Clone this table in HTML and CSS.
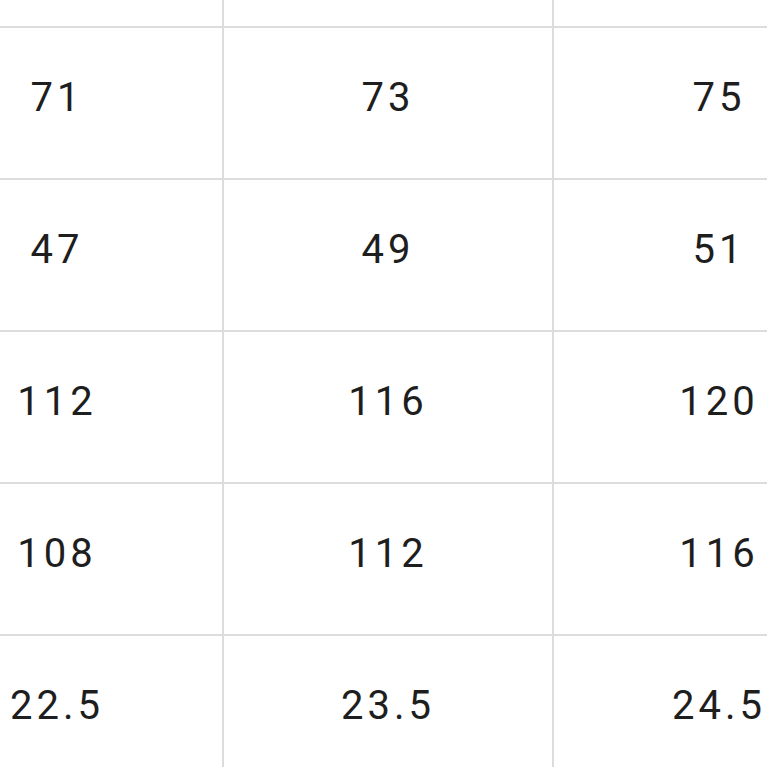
FILE: index.html
```html
<!DOCTYPE html>
<html>
<head>
<meta charset="utf-8">
<link rel="stylesheet" href="styles.css">
</head>
<body>
<div class="viewport">
  <div class="table">
    <div class="cell"></div><div class="cell"></div><div class="cell"></div>
    <div class="cell">71</div><div class="cell">73</div><div class="cell">75</div>
    <div class="cell">47</div><div class="cell">49</div><div class="cell">51</div>
    <div class="cell">112</div><div class="cell">116</div><div class="cell">120</div>
    <div class="cell">108</div><div class="cell">112</div><div class="cell">116</div>
    <div class="cell">22.5</div><div class="cell">23.5</div><div class="cell">24.5</div>
  </div>
</div>
</body>
</html>
```
FILE: styles.css
```css
html, body {
  margin: 0;
  padding: 0;
  background: #ffffff;
}
.viewport {
  width: 767px;
  height: 767px;
  overflow: hidden;
}
.table {
  display: grid;
  grid-template-columns: 330px 328px 330px;
  grid-auto-rows: 150px;
  gap: 2px;
  background: #dcdcdc;
  width: max-content;
  margin-left: -108px;
  margin-top: -124px;
}
.cell {
  background: #ffffff;
  display: flex;
  align-items: center;
  justify-content: center;
  padding-bottom: 12px;
  box-sizing: border-box;
  font-family: Roboto, "Liberation Sans", sans-serif;
  font-size: 40px;
  letter-spacing: 4px;
  color: #1e1e1e;
}
```
